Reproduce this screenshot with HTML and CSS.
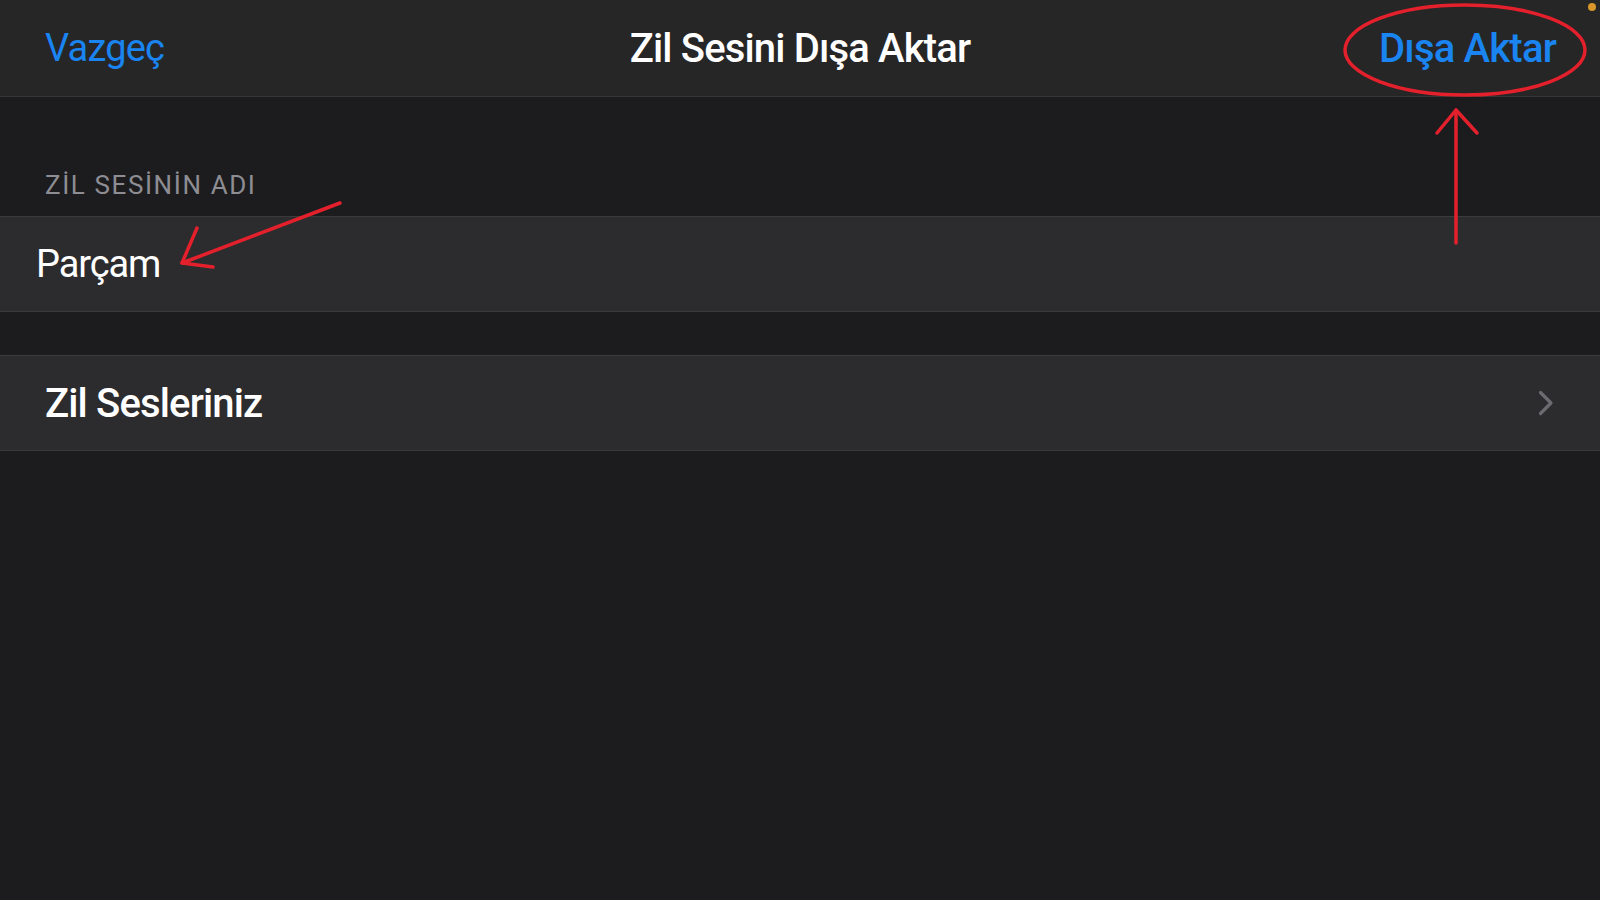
FILE: index.html
```html
<!DOCTYPE html>
<html lang="tr">
<head>
    <meta charset="UTF-8">
    <meta name="viewport" content="width=device-width, initial-scale=1.0">
    <title>Zil Sesini Dışa Aktar</title>
    <link rel="stylesheet" href="styles.css">
</head>
<body>
    <div class="screen">
        <header class="navbar">
            <span class="nav-left">Vazgeç</span>
            <span class="nav-title">Zil Sesini Dışa Aktar</span>
            <span class="nav-right">Dışa Aktar</span>
        </header>

        <div class="section-title">ZİL SESİNİN ADI</div>
        <div class="row row-input">Parçam</div>

        <div class="row row-link">
            <span>Zil Sesleriniz</span>
            <svg class="chevron" width="16" height="26" viewBox="0 0 16 26">
                <path d="M2.5 2.5 L13 13 L2.5 23.5" fill="none" stroke="#6b6b70" stroke-width="3.2" stroke-linecap="round" stroke-linejoin="round"/>
            </svg>
        </div>

        <!-- işaretlemeler (ekran görüntüsü üzerine çizilmiş) -->
        <svg class="marks" width="1600" height="900" viewBox="0 0 1600 900">
            <g fill="none" stroke="#e3202b" stroke-width="3.5" stroke-linecap="round" stroke-linejoin="round">
                <ellipse cx="1465" cy="50" rx="120" ry="45"/>
                <path d="M1456 110 V243"/>
                <path d="M1437 133 L1456 110 L1477 133"/>
                <path d="M340 203 L182 263"/>
                <path d="M197 228 L182 263 L213 267"/>
            </g>
            <circle cx="1592" cy="7" r="4" fill="#d9962b"/>
        </svg>
    </div>
</body>
</html>
```
FILE: styles.css
```css
body {
    margin: 0;
    background-color: #1c1c1e;
    font-family: Roboto, "Noto Sans", sans-serif;
    color: white;
}
.screen {
    position: relative;
    width: 1600px;
    height: 900px;
    overflow: hidden;
}
.navbar {
    display: grid;
    grid-template-columns: 1fr auto 1fr;
    align-items: center;
    height: 96px;
    padding: 0 45px;
    background-color: #262626;
    border-bottom: 1px solid #363636;
    font-size: 40px;
}
.nav-left {
    color: #1a84f0;
    font-size: 38px;
    letter-spacing: -0.8px;
}
.nav-title {
    font-weight: 500;
    letter-spacing: -0.85px;
}
.nav-right {
    justify-self: end;
    color: #1a84f0;
    font-weight: 500;
    letter-spacing: -0.8px;
    margin-right: -1px;
}
.section-title {
    height: 119px;
    box-sizing: border-box;
    display: flex;
    align-items: flex-end;
    padding: 0 0 18px 45px;
    font-size: 26px;
    line-height: 26px;
    color: #8d8d93;
    letter-spacing: 1.6px;
}
.row {
    display: flex;
    align-items: center;
    height: 94px;
    background-color: #2c2c2e;
    border-top: 1px solid #3a3a3c;
    border-bottom: 1px solid #3a3a3c;
    font-size: 40px;
}
.row-input {
    padding-left: 36px;
    font-size: 38px;
    letter-spacing: -1.1px;
}
.row-link {
    margin-top: 43px;
    padding: 0 46px 0 45px;
    justify-content: space-between;
    font-weight: 500;
    letter-spacing: -0.85px;
}
.marks {
    position: absolute;
    left: 0;
    top: 0;
    pointer-events: none;
}
```
